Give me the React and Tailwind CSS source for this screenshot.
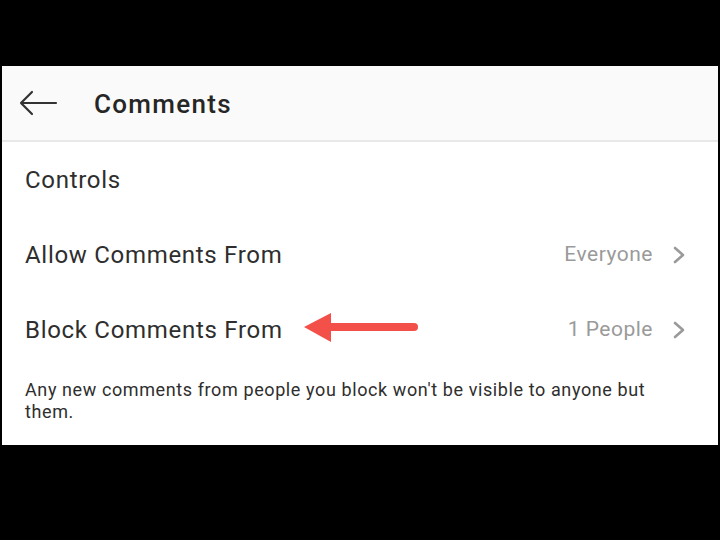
import React from "react";

function Chevron() {
  return (
    <svg width="14" height="18" viewBox="0 0 14 18" className="ml-[19px]">
      <path d="M3 2 L11 9 L3 16" fill="none" stroke="#9a9a9a" strokeWidth="2.6" strokeLinecap="round" strokeLinejoin="round" />
    </svg>
  );
}

export default function App() {
  return (
    <div className="w-[720px] h-[540px] bg-black pt-[66px] px-[2px]" style={{ fontFamily: "Roboto, 'Noto Sans', sans-serif" }}>
      <div className="relative h-[379px] bg-white">
        <div className="flex items-center h-[76px] bg-[#fafafa] border-b-2 border-[#e8e8e8]">
          <svg width="40" height="28" viewBox="0 0 40 28" className="ml-[16px]">
            <path d="M3 14 H38 M14 3 L3 14 L14 25" fill="none" stroke="#333" strokeWidth="2.2" strokeLinecap="round" strokeLinejoin="round" />
          </svg>
          <div className="ml-[36px] text-[26px] font-medium text-[#262626] tracking-[1.3px] pt-[2px]">Comments</div>
        </div>
        <div className="flex items-center h-[75px] pt-[1px] pl-[23px] text-[24px] tracking-[0.7px] text-[#2e2e2e]">Controls</div>
        <div className="flex items-center h-[75px] pt-[1px] pl-[23px] pr-[32px] text-[24px] text-[#2e2e2e]">
          <div className="flex-1 tracking-[0.7px]">Allow Comments From</div>
          <div className="text-[21px] tracking-[0.5px] text-[#9a9a9a]">Everyone</div>
          <Chevron />
        </div>
        <div className="flex items-center h-[75px] pt-[1px] pl-[23px] pr-[32px] text-[24px] text-[#2e2e2e]">
          <div className="flex-1 tracking-[0.7px]">Block Comments From</div>
          <div className="text-[21px] tracking-[0.5px] text-[#9a9a9a]">1 People</div>
          <Chevron />
        </div>
        <div className="pl-[23px] pr-[50px] pt-[12px] text-[18px] leading-[22px] tracking-[0.6px] text-[#2e2e2e]">
          Any new comments from people you block won't be visible to anyone but them.
        </div>
        <svg width="120" height="34" viewBox="0 0 120 34" className="absolute left-[300px] top-[245px]">
          <path d="M26 16 H112" stroke="#f4504a" strokeWidth="8" strokeLinecap="round" />
          <path d="M2 16 L29 2 L29 31 Z" fill="#f4504a" />
        </svg>
      </div>
    </div>
  );
}
